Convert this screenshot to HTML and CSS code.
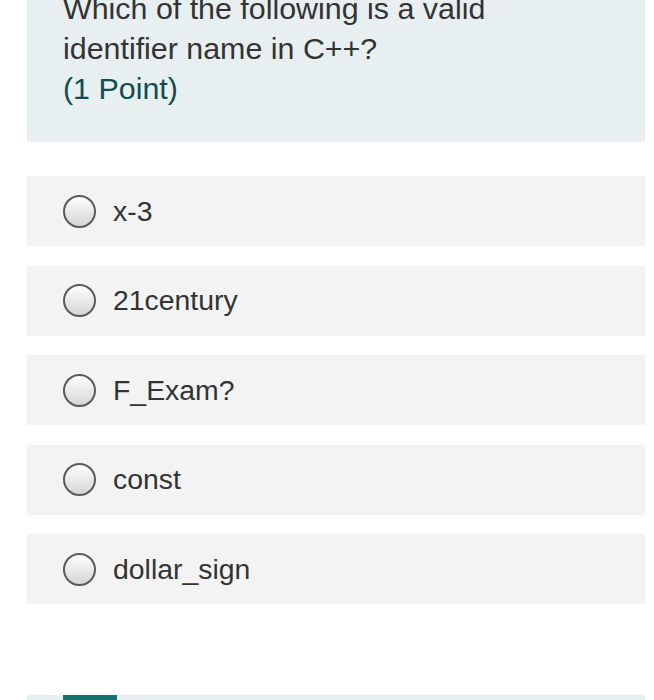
FILE: index.html
```html
<!DOCTYPE html>
<html>
<head>
  <title>Quiz Question</title>
  <link rel="stylesheet" href="styles.css">
</head>
<body>
  <div class="page">
    <!-- Question header -->
    <div class="question">
      <div class="question-title">Which of the following is a valid identifier name in C++?</div>
      <div class="question-points">(1 Point)</div>
    </div>

    <!-- Choices -->
    <div class="choices">
      <label class="choice"><span class="radio"></span><span class="choice-text">x-3</span></label>
      <label class="choice"><span class="radio"></span><span class="choice-text">21century</span></label>
      <label class="choice"><span class="radio"></span><span class="choice-text">F_Exam?</span></label>
      <label class="choice"><span class="radio"></span><span class="choice-text">const</span></label>
      <label class="choice"><span class="radio"></span><span class="choice-text">dollar_sign</span></label>
    </div>

    <!-- Next question header (cut off) -->
    <div class="next-question">
      <div class="next-tab"></div>
    </div>
  </div>
</body>
</html>
```

FILE: styles.css
```css
body {
  margin: 0;
  background-color: #ffffff;
  font-family: "Liberation Sans", Arial, sans-serif;
  overflow: hidden;
}
.page {
  width: 618px;
  margin-left: 27px;
  margin-top: -12px;
}
.question {
  background-color: #e7eff1; /* pale blue-grey */
  padding: 0 36px 34px 36px;
  font-size: 30.4px;
  line-height: 40px;
}
.question-title {
  color: #333333;
  width: 450px;
}
.question-points {
  color: #124c4c;
}
.choices {
  display: flex;
  flex-direction: column;
  gap: 19.5px;
  margin-top: 34px;
}
.choice {
  display: flex;
  align-items: center;
  height: 70px;
  padding-left: 36px;
  background-color: #f3f3f3;
}
.radio {
  box-sizing: border-box;
  width: 33px;
  height: 33px;
  border: 2px solid #5a5a5a;
  border-radius: 50%;
  background: linear-gradient(#fdfdfd, #d6d6d6);
  flex-shrink: 0;
}
.choice-text {
  margin-left: 17px;
  font-size: 28.4px;
  color: #333333;
}
.next-question {
  margin-top: 91px;
  height: 40px;
  background-color: #e7eff1;
  padding-left: 36px;
}
.next-tab {
  width: 54px;
  height: 6px;
  background-color: #0e7572;
}
```
